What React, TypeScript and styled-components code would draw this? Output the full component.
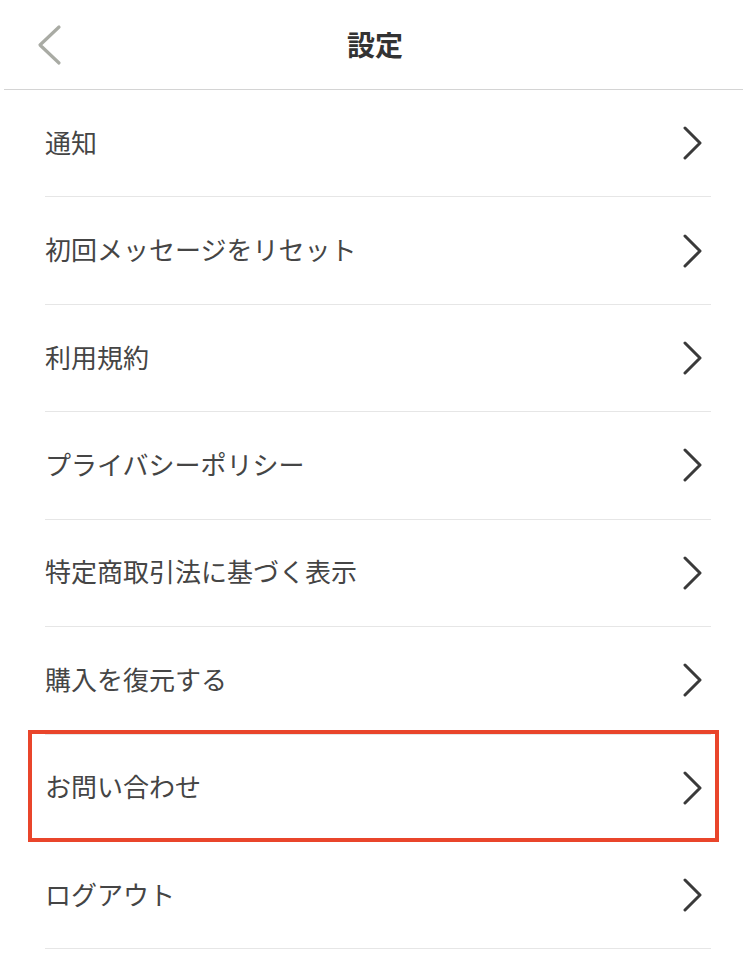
import * as React from "react";
import styled, { createGlobalStyle } from "styled-components";

const GlobalStyle = createGlobalStyle`
	html, body {
		margin: 0;
		padding: 0;
		background: #ffffff;
	}
	body {
		font-family: "Noto Sans CJK JP", "Noto Sans", sans-serif;
		-webkit-font-smoothing: antialiased;
	}
`;

const Page = styled.div`
	width: 743px;
	min-height: 956px;
	background: #ffffff;
	overflow: hidden;
`;

const Header = styled.header`
	height: 89px;
	margin-left: 4px;
	border-bottom: 1px solid #d4d4d4;
	display: grid;
	grid-template-columns: 80px 1fr 80px;
	align-items: center;
`;

const BackButton = styled.button`
	border: none;
	background: none;
	padding: 0 0 0 32px;
	height: 89px;
	display: flex;
	align-items: center;
	cursor: pointer;
`;

const Title = styled.h1`
	margin: 0;
	padding: 0 0 2px 3px;
	text-align: center;
	font-size: 28px;
	font-weight: 700;
	color: #333333;
	letter-spacing: 0;
`;

const List = styled.ul`
	list-style: none;
	margin: 0;
	padding: 0 32px 0 45px;
`;

interface RowProps {
	highlighted?: boolean;
}

const Row = styled.li<RowProps>`
	position: relative;
	height: 106.43px;
	border-bottom: 1px solid #e6e6e6;
	display: flex;
	align-items: center;
	justify-content: space-between;
	padding-right: 8px;
	cursor: pointer;
	&::after {
		content: "";
		display: ${(props) => (props.highlighted ? "block" : "none")};
		position: absolute;
		left: -17px;
		right: -8px;
		top: -5px;
		bottom: -1px;
		border: 4px solid #e9452b;
		pointer-events: none;
	}
`;

const Label = styled.span`
	font-size: 26px;
	font-weight: 400;
	color: #454545;
	line-height: 1;
	padding-bottom: 3px;
`;

const items = [
	"通知",
	"初回メッセージをリセット",
	"利用規約",
	"プライバシーポリシー",
	"特定商取引法に基づく表示",
	"購入を復元する",
	"お問い合わせ",
	"ログアウト",
];

function BackIcon() {
	return (
		<svg width="26" height="42" viewBox="0 0 26 42">
			<polyline
				points="23,3 4,21 23,39"
				fill="none"
				stroke="#a9aba4"
				strokeWidth="3.2"
				strokeLinecap="round"
				strokeLinejoin="round"
			/>
		</svg>
	);
}

function Chevron() {
	return (
		<svg width="20" height="34" viewBox="0 0 20 34">
			<polyline
				points="2,2 17,17 2,32"
				fill="none"
				stroke="#3a3a3a"
				strokeWidth="3"
				strokeLinecap="round"
				strokeLinejoin="round"
			/>
		</svg>
	);
}

export default function App() {
	return (
		<Page>
			<GlobalStyle />
			<Header>
				<BackButton aria-label="戻る">
					<BackIcon />
				</BackButton>
				<Title>設定</Title>
				<span />
			</Header>
			<List>
				{items.map((label) => (
					<Row key={label} highlighted={label === "お問い合わせ"}>
						<Label>{label}</Label>
						<Chevron />
					</Row>
				))}
			</List>
		</Page>
	);
}
